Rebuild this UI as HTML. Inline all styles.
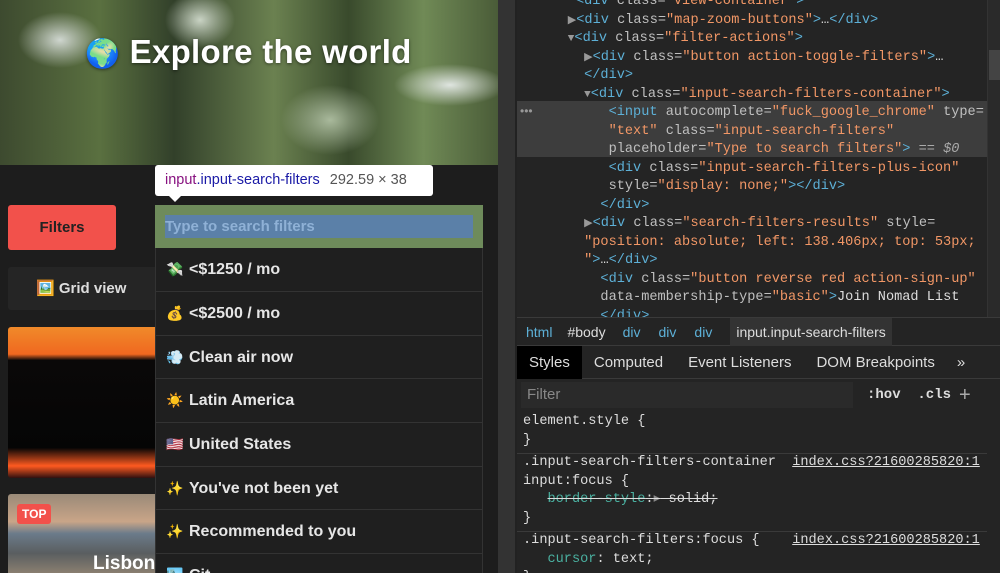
<!DOCTYPE html>
<html style="overflow:hidden;width:1000px;height:573px"><head><meta charset="utf-8"><style>
*{margin:0;padding:0;box-sizing:border-box}
body{width:1000px;height:573px;overflow:hidden;background:#1d1d1d;position:relative;font-family:"Liberation Sans","Noto Sans CJK JP",sans-serif}
.abs{position:absolute}
.hero{left:0;top:0;width:498px;height:165px;background:
radial-gradient(ellipse 60px 40px at 60px 40px,#cfd6cf,transparent 70%),
radial-gradient(ellipse 80px 30px at 450px 85px,#dfe5e0,transparent 70%),
radial-gradient(ellipse 50px 40px at 200px 20px,#c9d3c4,transparent 70%),
radial-gradient(ellipse 70px 50px at 330px 120px,#a9b99c,transparent 70%),
linear-gradient(90deg,#3d4a2f,#5a7040 20%,#32402a 35%,#6b8150 55%,#394a2c 70%,#708a56 85%,#4a5c38);
}
.title{left:85px;top:33px;color:#fff;font-size:33px;font-weight:bold;text-shadow:0 1px 3px rgba(0,0,0,.5);letter-spacing:0.3px}
.sb{left:498px;top:0;width:19px;height:573px;background:#333;border-right:2px solid #222}
.filters{left:8px;top:205px;width:108px;height:45px;background:#f2514b;border-radius:3px;color:#222;font-weight:bold;font-size:15px;text-align:center;line-height:45px}
.grid{left:8px;top:267px;width:150px;height:43px;background:#252525;border-radius:3px;color:#ddd;font-weight:bold;font-size:15px;line-height:43px;padding-left:28px}
.img1{left:8px;top:327px;width:150px;height:151px;background:linear-gradient(180deg,#f08a2a 0%,#f06820 18%,#0a0808 22%,#050505 80%,#ff5a20 92%,#301010 100%);border-radius:3px}
.img2{left:8px;top:494px;width:150px;height:79px;background:linear-gradient(180deg,#9a8a78,#c9a588 35%,#6b7b8a 50%,#5a5e60 75%,#8a7f70);border-radius:3px 3px 0 0}
.top{left:17px;top:504px;background:#f2514b;color:#fff;font-size:12px;font-weight:bold;padding:3px 5px;border-radius:3px}
.lis{left:93px;top:553px;color:#fff;font-size:19px;font-weight:bold}
.dd{left:155px;top:205px;width:328px;height:368px;background:#1f1f1f;border-left:1px solid #333;border-right:1px solid #333}
.inp{left:155px;top:205px;width:328px;height:43px;background:#6e8b5b}
.inp2{left:165px;top:215px;width:308px;height:23px;background:#5b80a8;color:#8fb1d6;font-size:15px;font-weight:bold;line-height:23px}
.row{position:absolute;left:156px;width:326px;height:44px;border-top:1px solid #333;color:#e6e6e6;font-weight:bold;font-size:16px;line-height:43px;padding-left:10px}
.row i{font-style:normal;font-size:14px;display:inline-block;width:23px}
.tip{left:155px;top:165px;width:278px;height:31px;background:#fff;border-radius:3px;font-size:14.5px;line-height:31px;padding-left:10px}
.arr{left:168px;top:195px;width:0;height:0;border-left:7px solid transparent;border-right:7px solid transparent;border-top:7px solid #fff}
.dt{left:517px;top:0;width:483px;height:573px;background:#242424}
.code{left:527px;top:0;width:460px;font-family:"Liberation Mono",monospace;font-size:13.6px;color:#ddd;line-height:18.5px;white-space:pre;overflow:hidden}
.t{color:#5db0d7}.v{color:#f29766}.at{color:#c0c0c0}
.hl{left:517px;top:101px;width:470px;height:56px;background:#3d3d3d}
.vsb{left:987px;top:0;width:13px;height:318px;background:#2a2a2a;border-left:1px solid #333}
.bc{left:517px;top:317px;width:483px;height:29px;background:#242424;border-top:1px solid #3a3a3a;border-bottom:1px solid #3a3a3a;font-size:14px;line-height:28px;color:#ddd}
.tabs{left:517px;top:346px;width:483px;height:33px;background:#242424;border-bottom:1px solid #3a3a3a;font-size:15px;line-height:33px;color:#ddd}
.fl{left:517px;top:380px;width:470px;height:30px;font-size:15px;line-height:30px;color:#888}
.css{left:517px;top:413px;width:470px;height:160px;overflow:hidden;padding-left:6px;font-family:"Liberation Mono",monospace;font-size:13.6px;color:#ddd;line-height:18.5px;white-space:pre}
.tr{color:#999;font-size:11px}
</style></head><body>
<div class="abs hero"></div>
<div class="abs title"><span style="font-size:28px">🌍</span> Explore the world</div>
<div class="abs sb"></div>
<div class="abs filters">Filters</div>
<div class="abs grid">🖼️ Grid view</div>
<div class="abs img1"></div>
<div class="abs img2"></div>
<div class="abs top">TOP</div>
<div class="abs lis">Lisbon</div>
<div class="abs dd"></div>
<div class="abs inp"></div>
<div class="abs inp2">Type to search filters</div>
<div class="row" style="top:248px;border-top:none"><i>💸</i>&lt;$1250 / mo</div>
<div class="row" style="top:291px"><i>💰</i>&lt;$2500 / mo</div>
<div class="row" style="top:335px"><i>💨</i>Clean air now</div>
<div class="row" style="top:378px"><i>☀️</i>Latin America</div>
<div class="row" style="top:422px"><i>🇺🇸</i>United States</div>
<div class="row" style="top:466px"><i>✨</i>You've not been yet</div>
<div class="row" style="top:509px"><i>✨</i>Recommended to you</div>
<div class="row" style="top:553px"><i>🏙️</i>Cit</div>
<div class="abs tip"><span style="color:#881280">input</span><span style="color:#1a1aa6">.input-search-filters</span> <span style="color:#555;margin-left:6px">292.59 × 38</span></div>
<div class="abs arr"></div>
<div class="abs dt"></div>
<div class="abs hl"></div>
<div class="abs vsb"><div style="position:absolute;top:50px;left:1px;width:11px;height:30px;background:#444"></div></div>
<div class="abs code" style="top:-7px"><span class="t">      &lt;div </span><span class="at">class=</span><span class="v">"view-container"</span><span class="t">&gt;</span>
     <span class="tr">▶</span><span class="t">&lt;div </span><span class="at">class=</span><span class="v">"map-zoom-buttons"</span><span class="t">&gt;</span>…<span class="t">&lt;/div&gt;</span>
     <span class="tr">▼</span><span class="t">&lt;div </span><span class="at">class=</span><span class="v">"filter-actions"</span><span class="t">&gt;</span>
       <span class="tr">▶</span><span class="t">&lt;div </span><span class="at">class=</span><span class="v">"button action-toggle-filters"</span><span class="t">&gt;</span>…
       <span class="t">&lt;/div&gt;</span>
       <span class="tr">▼</span><span class="t">&lt;div </span><span class="at">class=</span><span class="v">"input-search-filters-container"</span><span class="t">&gt;</span>
          <span class="t">&lt;input </span><span class="at">autocomplete=</span><span class="v">"fuck_google_chrome"</span><span class="at"> type=</span>
          <span class="v">"text"</span><span class="at"> class=</span><span class="v">"input-search-filters"</span>
          <span class="at">placeholder=</span><span class="v">"Type to search filters"</span><span class="t">&gt;</span> <span style="color:#aaa">== <i>$0</i></span>
          <span class="t">&lt;div </span><span class="at">class=</span><span class="v">"input-search-filters-plus-icon"</span>
          <span class="at">style=</span><span class="v">"display: none;"</span><span class="t">&gt;&lt;/div&gt;</span>
         <span class="t">&lt;/div&gt;</span>
       <span class="tr">▶</span><span class="t">&lt;div </span><span class="at">class=</span><span class="v">"search-filters-results"</span><span class="at"> style=</span>
       <span class="v">"position: absolute; left: 138.406px; top: 53px;</span>
       <span class="v">"</span><span class="t">&gt;</span>…<span class="t">&lt;/div&gt;</span>
         <span class="t">&lt;div </span><span class="at">class=</span><span class="v">"button reverse red action-sign-up"</span>
         <span class="at">data-membership-type=</span><span class="v">"basic"</span><span class="t">&gt;</span>Join Nomad List
         <span class="t">&lt;/div&gt;</span></div>
<div class="abs" style="left:520px;top:104px;color:#999;font-size:12px">•••</div>
<div class="abs bc"><span style="color:#5db0d7;margin-left:9px">html</span><span style="margin-left:15px">#body</span><span style="color:#5db0d7;margin-left:17px">div</span><span style="color:#5db0d7;margin-left:18px">div</span><span style="color:#5db0d7;margin-left:18px">div</span><span style="margin-left:18px;display:inline-block;background:#333;padding:0 6px">input.input-search-filters</span></div>
<div class="abs tabs"><span style="display:inline-block;background:#000;padding:0 12px">Styles</span><span style="margin-left:12px">Computed</span><span style="margin-left:25px">Event Listeners</span><span style="margin-left:25px">DOM Breakpoints</span><span style="margin-left:22px">»</span></div>
<div class="abs fl" style="background:#242424"><div style="position:absolute;left:4px;top:2px;width:332px;height:26px;background:#2a2a2a;padding-left:6px;line-height:26px">Filter</div><span style="position:absolute;left:350px;color:#ddd;font-weight:bold;font-family:'Liberation Mono',monospace;font-size:14px">:hov&nbsp; .cls</span><span style="position:absolute;left:442px;color:#aaa;font-size:20px">+</span></div>
<div class="abs css">element.style {
}
<span style="display:block;border-top:1px solid #3a3a3a;margin:3px -6px 0"></span>.input-search-filters-container  <u style="color:#ddd">index.css?21600285820:1</u>
input:focus {
   <s><span style="color:#4ab0a0">border-style</span>:<span style="color:#888">▸</span> solid;</s>
}
<span style="display:block;border-top:1px solid #3a3a3a;margin:3px -6px 0"></span>.input-search-filters:focus {    <u>index.css?21600285820:1</u>
   <span style="color:#4ab0a0">cursor</span>: text;
}</div>
</body></html>
